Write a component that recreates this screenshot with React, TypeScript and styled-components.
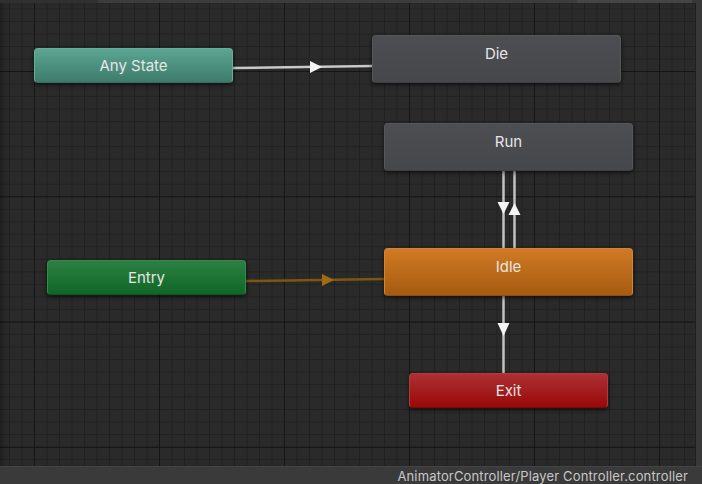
import React from "react";
import styled, { createGlobalStyle, css } from "styled-components";

const Global = createGlobalStyle`
  html, body { margin: 0; padding: 0; background: #282828; }
  body { font-family: Inter, "Noto Sans", "Liberation Sans", sans-serif; }
  * { box-sizing: border-box; }
`;

const Window = styled.div`
  width: 702px;
  height: 484px;
  display: flex;
  flex-direction: column;
  overflow: hidden;
  background: #282828;
`;

const TopEdge = styled.div`
  height: 3px;
  display: flex;
  background: #2e2e2e;
`;

const TopSegment = styled.div<{ $w: number; $c: string }>`
  width: ${(p) => p.$w}px;
  flex: none;
  background: ${(p) => p.$c};
`;

const Body = styled.div`
  flex: 1;
  display: flex;
  min-height: 0;
`;

const Canvas = styled.div`
  position: relative;
  flex: 1;
  background-color: #2a2a2a;
  background-image:
    linear-gradient(to right, #161616 1px, transparent 1px),
    linear-gradient(to bottom, #161616 1px, transparent 1px),
    linear-gradient(to right, #212121 1px, transparent 1px),
    linear-gradient(to bottom, #212121 1px, transparent 1px);
  background-size: 125px 125px, 125px 125.3px, 12.5px 12.5px, 12.5px 12.53px;
  background-position: 34px 0, 0 68px, 9px 0, 0 5.5px;
  box-shadow: inset 6px 0 6px -4px rgba(0, 0, 0, 0.35);
`;

const RightStrip = styled.div`
  width: 7px;
  flex: none;
  background: #383838;
  border-left: 1px solid #1f1f1f;
`;

const StatusBar = styled.div`
  height: 18px;
  flex: none;
  display: flex;
  align-items: center;
  justify-content: flex-end;
  padding-right: 14px;
  background: #3a3a3a;
  border-top: 1px solid #444;
  color: #c8c8c8;
  font-size: 13px;
  letter-spacing: 0.15px;
`;

const Wires = styled.svg`
  position: absolute;
  inset: 0;
  width: 100%;
  height: 100%;
`;

type Variant = "any" | "state" | "default" | "entry" | "exit";

const variants: Record<Variant, ReturnType<typeof css>> = {
  any: css`
    background: linear-gradient(#5ca593, #3e7b6b);
    border: 1px solid #66ad9b;
    border-bottom-color: #356a5c;
  `,
  state: css`
    background: linear-gradient(#4d4e52, #46474b);
    border: 1px solid #56575b;
    border-bottom-color: #3e3f42;
  `,
  default: css`
    background: linear-gradient(#d07a25, #a65b10);
    border: 1px solid #d8832e;
    border-bottom-color: #8f4e0d;
  `,
  entry: css`
    background: linear-gradient(#2c8142, #0f6625);
    border: 1px solid #348a4a;
    border-bottom-color: #0b571e;
  `,
  exit: css`
    background: linear-gradient(#ad3033, #990909);
    border: 1px solid #b5393c;
    border-bottom-color: #820606;
  `,
};

const Node = styled.div<{ $x: number; $y: number; $w: number; $h: number; $v: Variant }>`
  position: absolute;
  left: ${(p) => p.$x}px;
  top: ${(p) => p.$y}px;
  width: ${(p) => p.$w}px;
  height: ${(p) => p.$h}px;
  border-radius: 4px;
  box-shadow: 0 2px 4px rgba(0, 0, 0, 0.55);
  display: flex;
  flex-direction: column;
  ${(p) => variants[p.$v]}
`;

const Label = styled.div`
  height: 34px;
  display: flex;
  align-items: center;
  justify-content: center;
  color: #e6e6e6;
  font-size: 15px;
`;

const nodes: { name: string; x: number; y: number; w: number; h: number; v: Variant }[] = [
  { name: "Any State", x: 34, y: 45, w: 199, h: 35, v: "any" },
  { name: "Die", x: 372, y: 32, w: 249, h: 48, v: "state" },
  { name: "Run", x: 384, y: 120, w: 249, h: 48, v: "state" },
  { name: "Idle", x: 384, y: 245, w: 249, h: 48, v: "default" },
  { name: "Entry", x: 47, y: 257, w: 199, h: 35, v: "entry" },
  { name: "Exit", x: 409, y: 370, w: 199, h: 35, v: "exit" },
];

export default function App() {
  return (
    <>
      <Global />
      <Window>
        <TopEdge>
          <TopSegment $w={98} $c="#303030" />
          <TopSegment $w={479} $c="#3c3c3c" />
          <TopSegment $w={115} $c="#454545" />
          <TopSegment $w={10} $c="#383838" />
        </TopEdge>
        <Body>
          <Canvas>
            <Wires viewBox="0 0 695 463">
              {/* Any State -> Die */}
              <line x1="233" y1="65" x2="372" y2="63" stroke="#2a2a2a" strokeWidth="4" />
              <line x1="233" y1="65" x2="372" y2="63" stroke="#c9c9c9" strokeWidth="2.5" />
              <polygon points="310,58 322,64 310,70" fill="#f4f4f4" />
              {/* Run -> Idle */}
              <line x1="503.5" y1="168" x2="503.5" y2="245" stroke="#c2c2c2" strokeWidth="2.5" />
              <polygon points="497.5,199 509.5,199 503.5,211" fill="#f4f4f4" />
              {/* Idle -> Run */}
              <line x1="514.5" y1="168" x2="514.5" y2="245" stroke="#c2c2c2" strokeWidth="2.5" />
              <polygon points="508.5,212 520.5,212 514.5,200" fill="#f4f4f4" />
              {/* Idle -> Exit */}
              <line x1="503.5" y1="293" x2="503.5" y2="370" stroke="#c2c2c2" strokeWidth="2.5" />
              <polygon points="497.5,320 509.5,320 503.5,333" fill="#f4f4f4" />
              {/* Entry -> Idle */}
              <line x1="246" y1="278" x2="384" y2="276" stroke="#7e5511" strokeWidth="2.5" />
              <polygon points="322,271 334,277 322,283" fill="#a26c13" />
            </Wires>
            {nodes.map((n) => (
              <Node key={n.name} $x={n.x} $y={n.y} $w={n.w} $h={n.h} $v={n.v}>
                <Label>{n.name}</Label>
              </Node>
            ))}
          </Canvas>
          <RightStrip />
        </Body>
        <StatusBar>AnimatorController/Player Controller.controller</StatusBar>
      </Window>
    </>
  );
}
